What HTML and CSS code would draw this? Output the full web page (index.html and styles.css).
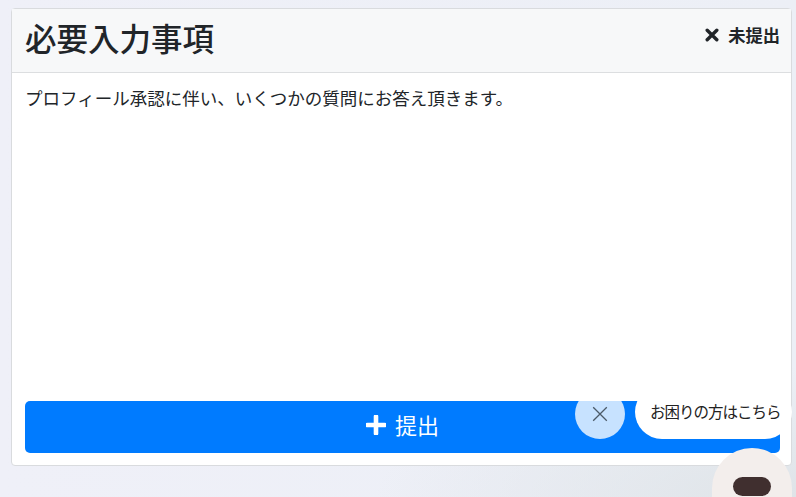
FILE: index.html
```html
<!DOCTYPE html>
<html lang="ja">
<head>
<meta charset="utf-8">
<title>必要入力事項</title>
<link rel="stylesheet" href="styles.css">
</head>
<body>
<main class="card">
  <header class="card-header">
    <h2 class="title">必要入力事項</h2>
    <div class="status">
      <svg class="status-icon" viewBox="0 0 14 14" aria-hidden="true"><path d="M2.2 2.2 11.8 11.8M11.8 2.2 2.2 11.8"/></svg>
      <span>未提出</span>
    </div>
  </header>
  <section class="card-body">
    <p class="lead">プロフィール承認に伴い、いくつかの質問にお答え頂きます。</p>
    <button class="submit" type="button">
      <svg class="plus-icon" viewBox="0 0 20 20" aria-hidden="true"><path d="M10 1.5v17M1.5 10h17"/></svg>
      <span class="submit-label">提出</span>
    </button>
  </section>
</main>
<button class="help-close" type="button" aria-label="閉じる">
  <svg viewBox="0 0 16 16" aria-hidden="true"><path d="M1.2 1.2 14.8 14.8M14.8 1.2 1.2 14.8"/></svg>
</button>
<div class="help-bubble">お困りの方はこちら</div>
<div class="avatar"><span class="avatar-mouth"></span></div>
</body>
</html>
```
FILE: styles.css
```css
* { box-sizing: border-box; }
html, body { height: 100%; }
body {
  margin: 0;
  padding: 8px 4px 0 11px;
  height: 497px;
  overflow: hidden;
  position: relative;
  background: radial-gradient(ellipse 420px 130px at 100% 100%, #dfe4e8 0%, rgba(223,228,232,0) 100%), linear-gradient(90deg, #eff0f8 0%, #eceff6 100%);
  font-family: "Noto Sans CJK JP", "Noto Sans", sans-serif;
  color: #212529;
}
.card {
  height: 458px;
  background: #fff;
  border: 1px solid #d9dbde;
  border-radius: 4px;
  display: flex;
  flex-direction: column;
}
.card-header {
  height: 64px;
  flex: none;
  padding: 10px 11px 0 13px;
  background: #f7f8f9;
  border-bottom: 1px solid #dcdee0;
  display: flex;
  align-items: flex-start;
  justify-content: space-between;
}
.title {
  margin: 0;
  font-size: 31.5px;
  font-weight: 500;
  line-height: 1.2;
}
.status {
  display: flex;
  align-items: center;
  gap: 9px;
  margin-top: 4px;
  font-size: 17.3px;
  line-height: 24px;
  font-weight: 700;
}
.status-icon {
  width: 14px;
  height: 14px;
  fill: none;
  stroke: #212529;
  stroke-width: 3.4;
  stroke-linecap: round;
}
.card-body {
  flex: 1;
  padding: 12px 11px 12px 13px;
  display: flex;
  flex-direction: column;
  justify-content: space-between;
}
.lead {
  margin: 0;
  font-size: 17.5px;
  line-height: 26px;
}
.submit {
  height: 52px;
  border: 0;
  border-radius: 5px;
  background: #007bff;
  color: #fff;
  font: inherit;
  font-size: 22px;
  display: flex;
  align-items: center;
  justify-content: center;
  gap: 9px;
  padding: 0 0 5px;
}
.submit-label {
  line-height: 30px;
  margin-top: -2px;
}
.plus-icon {
  width: 20px;
  height: 20px;
  fill: none;
  stroke: #fff;
  stroke-width: 4.6;
  stroke-linecap: round;
}
.help-close {
  position: absolute;
  left: 575px;
  top: 389px;
  width: 50px;
  height: 50px;
  padding: 0;
  border: 0;
  border-radius: 50%;
  background: rgba(255, 255, 255, .78);
  display: flex;
  align-items: center;
  justify-content: center;
}
.help-close svg {
  width: 16px;
  height: 16px;
  fill: none;
  stroke: #4b5a68;
  stroke-width: 1.3;
}
.help-bubble {
  position: absolute;
  left: 635px;
  top: 385px;
  width: 157px;
  height: 54px;
  padding-left: 15px;
  background: #fff;
  border-radius: 27px;
  font-size: 15.5px;
  letter-spacing: -1px;
  line-height: 53px;
  color: #222;
  white-space: nowrap;
}
.avatar {
  position: absolute;
  left: 712px;
  top: 448px;
  width: 80px;
  height: 49px;
  border-radius: 40px 40px 0 0;
  background: #f3eeec;
}
.avatar-mouth {
  position: absolute;
  left: 21px;
  top: 29px;
  width: 38px;
  height: 19px;
  border-radius: 9.5px;
  background: #402f2f;
}
```
